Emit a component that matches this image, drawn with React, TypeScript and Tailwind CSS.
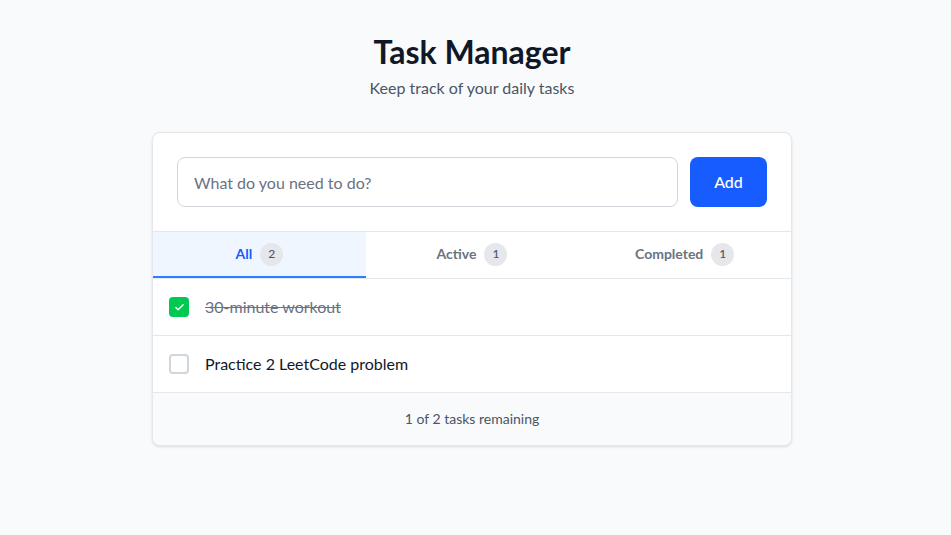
import { Check } from 'lucide-react'

const tasks = [
  { id: 1, title: '30-minute workout', done: true },
  { id: 2, title: 'Practice 2 LeetCode problem', done: false },
]

const tabs = [
  { label: 'All', count: 2, active: true },
  { label: 'Active', count: 1, active: false },
  { label: 'Completed', count: 1, active: false },
]

export default function App() {
  return (
    <div className="min-h-screen bg-gray-50 pt-[34px] pr-[7px] font-['Lato',sans-serif]">
      <div className="mx-auto w-[640px]">
        <div className="text-center">
          <h1 className="text-[32px] font-bold leading-9 text-gray-900">Task Manager</h1>
          <p className="mt-[6px] text-[16px] leading-6 text-gray-600">Keep track of your daily tasks</p>
        </div>

        <div className="mt-8 overflow-hidden rounded-lg border border-gray-200 bg-white shadow-sm">
          <div className="flex gap-3 border-b border-gray-200 p-6">
            <input
              className="h-[50px] flex-1 rounded-lg border border-gray-300 px-4 text-[16px] text-gray-900 placeholder:text-gray-500 outline-none"
              placeholder="What do you need to do?"
            />
            <button className="h-[50px] w-[77px] rounded-lg bg-[#175cff] text-[16px] font-medium text-white">
              Add
            </button>
          </div>

          <div className="grid grid-cols-3 border-b border-gray-200">
            {tabs.map((tab) => (
              <button
                key={tab.label}
                className={
                  tab.active
                    ? 'flex h-[46px] items-center justify-center gap-2 border-b-2 border-blue-500 bg-blue-50 text-sm font-bold text-blue-600'
                    : 'flex h-[46px] items-center justify-center gap-2 border-b-2 border-transparent text-sm font-bold text-gray-500'
                }
              >
                {tab.label}
                <span className="flex h-[23px] w-[23px] items-center justify-center rounded-full bg-gray-200 text-xs font-medium text-gray-600">
                  {tab.count}
                </span>
              </button>
            ))}
          </div>

          {tasks.map((task) => (
            <div key={task.id} className="flex h-[57px] items-center gap-4 border-b border-gray-200 px-4">
              {task.done ? (
                <span className="flex h-5 w-5 items-center justify-center rounded bg-green-500">
                  <Check size={11} strokeWidth={3} className="text-white" />
                </span>
              ) : (
                <span className="h-5 w-5 rounded border-2 border-gray-300" />
              )}
              <span className={task.done ? 'text-[16px] text-gray-500 line-through' : 'text-[16px] text-gray-900'}>
                {task.title}
              </span>
            </div>
          ))}

          <div className="bg-gray-50 py-4 text-center text-sm text-gray-600">1 of 2 tasks remaining</div>
        </div>
      </div>
    </div>
  )
}
